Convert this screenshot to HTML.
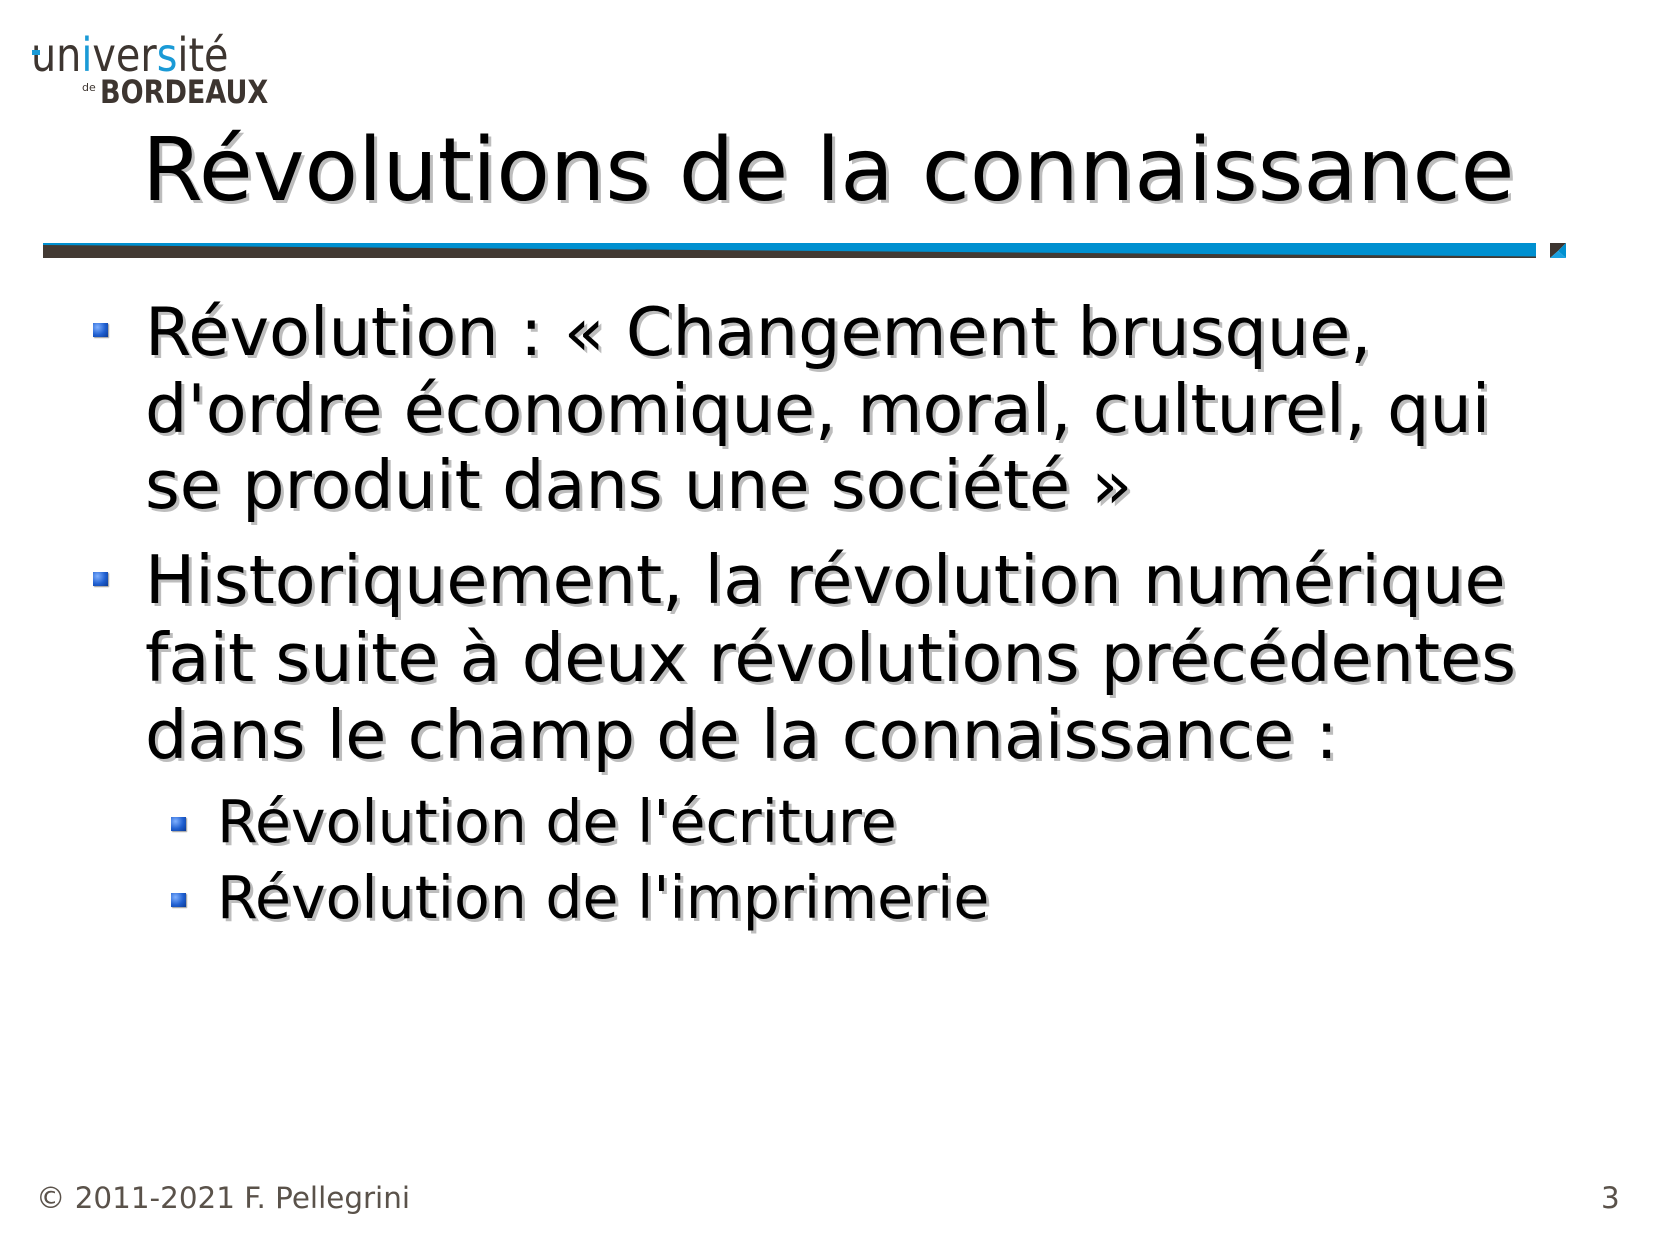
<!DOCTYPE html>
<html><head><meta charset="utf-8"><style>
html,body{margin:0;padding:0;background:#fff;}
body{width:1654px;height:1241px;position:relative;overflow:hidden;font-family:"DejaVu Sans","Liberation Sans",sans-serif;}
.t{position:absolute;white-space:nowrap;color:#000;text-shadow:3px 3px 0 #bdbdbd;}
.b{position:absolute;width:15px;height:14px;background:radial-gradient(circle at 30% 30%,#7fb0ff,#1f5fd0 55%,#0b3a95);box-shadow:1px 1px 1px #999;}
</style></head><body>
<!-- logo -->
<div style="position:absolute;left:31px;top:30px;font-family:'DejaVu Sans Condensed','DejaVu Sans',sans-serif;font-size:46px;line-height:50px;color:#3d3530;transform:scaleX(0.96);transform-origin:left;">un<span style="color:#1a9ad6">i</span>ver<span style="color:#1a9ad6">s</span>ité</div>
<div style="position:absolute;left:82px;top:81px;font-family:'DejaVu Sans',sans-serif;font-size:11px;color:#3d3530;">de</div>
<div style="position:absolute;left:100px;top:77px;font-family:'DejaVu Sans Condensed','DejaVu Sans',sans-serif;font-weight:bold;font-size:32px;line-height:31px;color:#3d3530;transform:scaleX(0.94);transform-origin:left;">BORDEAUX</div>
<div style="position:absolute;left:32px;top:50px;width:8px;height:5px;background:#1a9ad6;"></div>

<div class="t" style="left:142px;top:126px;font-size:87.5px;line-height:89px;">Révolutions de la connaissance</div>

<svg style="position:absolute;left:0;top:0" width="1654" height="270">
<rect x="43" y="243" width="1493" height="15" fill="#0090d0"/>
<polygon points="43,245 1536,256.5 1536,258 43,258" fill="#433a33"/>
<polygon points="1550,243 1566,243 1558,251 1550,258" fill="#3d3530"/>
<polygon points="1566,243 1558,251 1566,258" fill="#0090d0"/>
<polygon points="1558,251 1550,258 1566,258" fill="#1aa0e0"/>
</svg>

<div class="b" style="left:93px;top:323px;"></div>
<div class="t" style="left:145px;top:294px;font-size:66.8px;line-height:76.5px;">Révolution : « Changement brusque,<br>d'ordre économique, moral, culturel, qui<br>se produit dans une société »</div>

<div class="b" style="left:93px;top:572px;"></div>
<div class="t" style="left:145px;top:542px;font-size:66.8px;line-height:77.5px;">Historiquement, la révolution numérique<br>fait suite à deux révolutions précédentes<br>dans le champ de la connaissance :</div>

<div class="b" style="left:171px;top:817px;"></div>
<div class="t" style="left:217px;top:784px;font-size:58.5px;line-height:76px;">Révolution de l'écriture</div>
<div class="b" style="left:171px;top:893px;"></div>
<div class="t" style="left:217px;top:860px;font-size:58.5px;line-height:76px;">Révolution de l'imprimerie</div>

<div style="position:absolute;left:36px;top:1184px;font-size:29.4px;line-height:28px;color:#5a524a;white-space:nowrap;">© 2011-2021 F. Pellegrini</div>
<div style="position:absolute;left:1601px;top:1184px;font-size:29.4px;line-height:28px;color:#5a524a;">3</div>
</body></html>
